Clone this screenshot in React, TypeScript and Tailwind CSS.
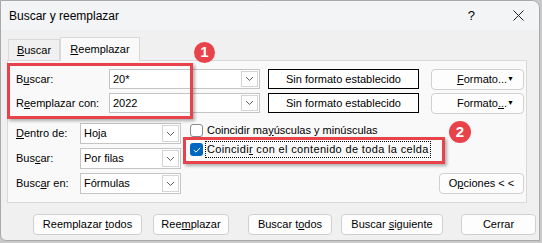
import React from "react";

function Chevron() {
  return (
    <svg width="9" height="6" viewBox="0 0 9 6" fill="none">
      <path d="M1 1l3.5 3.5L8 1" stroke="#5f5f5f" strokeWidth="1" />
    </svg>
  );
}

function Combo({ value, className }: { value: string; className: string }) {
  return (
    <div className={`flex items-center border border-[#c4c4c4] bg-white ${className}`}>
      <span className="flex-1 pl-[3px] text-black">{value}</span>
      <div className="mr-[1px] flex h-[calc(100%-2px)] w-[17px] items-center justify-center border border-[#d4d4d4] bg-white">
        <Chevron />
      </div>
    </div>
  );
}

function Btn({ children, className = "" }: { children: React.ReactNode; className?: string }) {
  return (
    <div
      className={`flex h-[21px] items-center justify-center rounded-[4px] border border-[#d0d0d0] bg-[#fdfdfd] text-black ${className}`}
    >
      {children}
    </div>
  );
}

export default function App() {
  return (
    <div className="h-[243px] w-[542px] bg-[#c9c9c9] font-['Segoe_UI','Liberation_Sans',Arial,sans-serif] text-[11px] text-black">
      <div className="relative flex h-[241px] w-[540px] flex-col overflow-hidden rounded-tr-[8px] rounded-bl-[6px] border border-[#a9a9a9] bg-[#f0f0f0]">
        {/* title bar */}
        <div className="flex h-[29px] items-center justify-between bg-[#f3f4f6] pl-[8px] pr-[15px]">
          <span className="text-[12px]">Buscar y reemplazar</span>
          <div className="flex items-center gap-[38px] text-[13px]">
            <span>?</span>
            <svg width="11" height="11" viewBox="0 0 11 11">
              <path d="M0.5 0.5l10 10M10.5 0.5l-10 10" stroke="#222" strokeWidth="1" />
            </svg>
          </div>
        </div>

        {/* tabs */}
        <div className="mt-[7px] flex items-end pl-[7px]">
          <div className="flex h-[21px] w-[52px] items-center justify-center border border-b-0 border-[#d9d9d9] bg-[#f0f0f0]">
            <span>
              <u>B</u>uscar
            </span>
          </div>
          <div className="relative z-10 -mb-px flex h-[24px] w-[80px] items-center justify-center border border-b-0 border-[#d9d9d9] bg-[#f9f9f9] pb-[1px]">
            <span>
              <u>R</u>eemplazar
            </span>
          </div>
        </div>

        {/* panel */}
        <div className="ml-[6px] flex h-[143px] w-[520px] flex-col border border-[#d9d9d9] bg-[#f9f9f9] pl-[8px] pr-[2px] pt-[8px]">
          <div className="flex flex-col gap-[4px]">
            <div className="flex h-[20px] items-center">
              <span className="w-[93px]">
                B<u>u</u>scar:
              </span>
              <Combo value="20*" className="h-[20px] w-[151px]" />
              <div className="ml-[8px] flex h-[20px] w-[151px] items-center justify-center border border-black bg-white">
                Sin formato establecido
              </div>
              <Btn className="ml-[12px] h-[19px] w-[93px] justify-between pl-[20px] pr-[4px]">
                <span>
                  <u>F</u>ormato...
                </span>
                <span className="text-[7px]">▼</span>
              </Btn>
            </div>
            <div className="flex h-[20px] items-center">
              <span className="w-[93px]">
                R<u>e</u>emplazar con:
              </span>
              <Combo value="2022" className="h-[20px] w-[151px]" />
              <div className="ml-[8px] flex h-[20px] w-[151px] items-center justify-center border border-black bg-white">
                Sin formato establecido
              </div>
              <Btn className="ml-[12px] h-[19px] w-[93px] justify-between pl-[20px] pr-[4px]">
                <span>
                  Formato<u>..</u>.
                </span>
                <span className="text-[7px]">▼</span>
              </Btn>
            </div>
          </div>

          <div className="mt-[10px] flex">
            <div className="flex flex-col gap-[4px]">
              <div className="flex h-[21px] items-center">
                <span className="w-[64px]">
                  <u>D</u>entro de:
                </span>
                <Combo value="Hoja" className="h-[21px] w-[101px]" />
              </div>
              <div className="flex h-[21px] items-center">
                <span className="w-[64px]">
                  Bus<u>c</u>ar:
                </span>
                <Combo value="Por filas" className="h-[21px] w-[101px]" />
              </div>
              <div className="flex h-[21px] items-center">
                <span className="w-[64px]">
                  Busc<u>a</u>r en:
                </span>
                <Combo value="Fórmulas" className="h-[21px] w-[101px]" />
              </div>
            </div>

            <div className="ml-[9px] flex flex-1 flex-col">
              <div className="flex h-[15px] items-center">
                <div className="h-[13px] w-[13px] rounded-[3px] border border-[#8a8a8a] bg-white" />
                <span className="ml-[4px]">
                  Coincidir ma<u>y</u>úsculas y minúsculas
                </span>
              </div>
              <div className="mt-[3px] flex h-[17px] items-center">
                <div className="flex h-[13px] w-[13px] items-center justify-center rounded-[3px] bg-[#0067c0]">
                  <svg width="8" height="6" viewBox="0 0 8 6">
                    <path d="M0.8 3l2.2 2.2L7.2 0.8" stroke="white" strokeWidth="1" fill="none" />
                  </svg>
                </div>
                <span className="ml-[2px] border border-dotted border-black px-[1px] leading-[15px] tracking-[0.35px]">
                  Coincidi<u>r</u> con el contenido de toda la celda
                </span>
              </div>
              <div className="mt-auto flex justify-end">
                <Btn className="w-[85px]">
                  <span>
                    O<u>p</u>ciones &lt; &lt;
                  </span>
                </Btn>
              </div>
            </div>
          </div>
        </div>

        {/* bottom buttons */}
        <div className="mt-[11px] flex items-center pl-[32px]">
          <Btn className="w-[109px]">
            <span>
              Reemplazar <u>t</u>odos
            </span>
          </Btn>
          <Btn className="ml-[11px] w-[76px]">
            <span>
              Ree<u>m</u>plazar
            </span>
          </Btn>
          <Btn className="ml-[19px] w-[84px]">
            <span>
              Buscar t<u>o</u>dos
            </span>
          </Btn>
          <Btn className="ml-[9px] w-[102px] border-[#0067c0]">
            <span>
              Buscar <u>s</u>iguiente
            </span>
          </Btn>
          <Btn className="ml-[18px] w-[75px]">
            <span>Cerrar</span>
          </Btn>
        </div>

        {/* annotations */}
        <div className="absolute left-[6px] top-[62px] h-[56px] w-[186px] border-[3px] border-[#e8434a] shadow-[2px_2px_3px_rgba(0,0,0,0.3)]" />
        <div className="absolute left-[182px] top-[136px] h-[27px] w-[262px] border-[3px] border-[#e8434a] shadow-[2px_2px_3px_rgba(0,0,0,0.3)]" />
        <div className="absolute left-[193px] top-[41px] flex h-[21px] w-[21px] items-center justify-center rounded-full bg-[#e8434a] text-[15px] font-bold text-white">
          1
        </div>
        <div className="absolute left-[448px] top-[120px] flex h-[22px] w-[22px] items-center justify-center rounded-full bg-[#e8434a] text-[15px] font-bold text-white">
          2
        </div>
      </div>
    </div>
  );
}
